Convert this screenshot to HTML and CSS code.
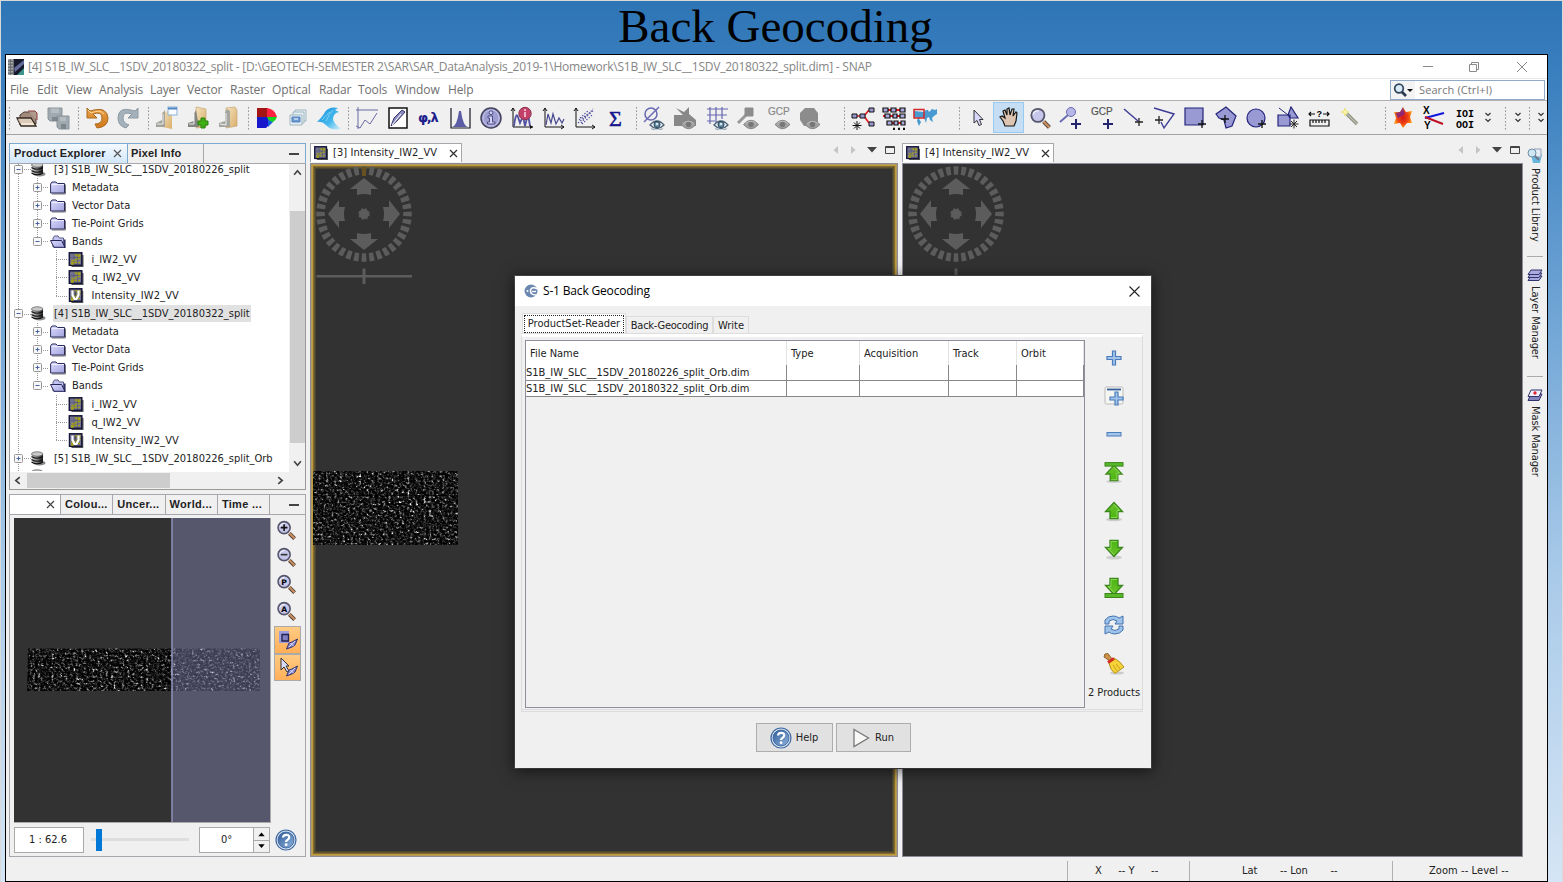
FILE: index.html
```html
<!DOCTYPE html>
<html lang="en">
<head>
<meta charset="utf-8">
<title>Back Geocoding</title>
<link rel="stylesheet" href="styles.css">
</head>
<body>
<svg class="defs" width="0" height="0" aria-hidden="true">
  <defs>
    <filter id="speckle" x="0" y="0" width="100%" height="100%" color-interpolation-filters="sRGB">
      <feTurbulence type="fractalNoise" baseFrequency="0.37 0.43" numOctaves="4" seed="23"/>
      <feColorMatrix type="matrix" values="1.2 .9 0 0 -.64  1.2 .9 0 0 -.64  1.2 .9 0 0 -.64  0 0 0 0 1"/>
      <feComponentTransfer><feFuncR type="gamma" exponent="2.8"/><feFuncG type="gamma" exponent="2.8"/><feFuncB type="gamma" exponent="2.8"/></feComponentTransfer>
      <feComposite in2="SourceGraphic" operator="in"/>
    </filter>
    <linearGradient id="gFolder" x1="0" y1="0" x2="1" y2="1"><stop offset="0" stop-color="#f4e3bd"/><stop offset="1" stop-color="#d9ae6b"/></linearGradient>
    <linearGradient id="gOrange" x1="0" y1="0" x2="0" y2="1"><stop offset="0" stop-color="#e9a24a"/><stop offset="1" stop-color="#d0771a"/></linearGradient>
    <linearGradient id="gBlue" x1="0" y1="0" x2="1" y2="1"><stop offset="0" stop-color="#2f5c9a"/><stop offset="1" stop-color="#8fb4dc"/></linearGradient>
    <linearGradient id="gGreen" x1="0" y1="0" x2="0" y2="1"><stop offset="0" stop-color="#6cc230"/><stop offset="1" stop-color="#49b50f"/></linearGradient>
    <linearGradient id="gCyl" x1="0" y1="0" x2="1" y2="0"><stop offset="0" stop-color="#ddd"/><stop offset=".45" stop-color="#888"/><stop offset="1" stop-color="#222"/></linearGradient>
    <linearGradient id="gWave" x1="0" y1="0" x2="1" y2="1"><stop offset="0" stop-color="#1590d8"/><stop offset=".6" stop-color="#45b8ee"/><stop offset="1" stop-color="#d8f2fc"/></linearGradient>
    <radialGradient id="gStar"><stop offset="0" stop-color="#d01818"/><stop offset=".6" stop-color="#f04414"/><stop offset="1" stop-color="#ff9810"/></radialGradient>
    <linearGradient id="gLav" x1="0" y1="0" x2="1" y2="1"><stop offset="0" stop-color="#dcdcff"/><stop offset="1" stop-color="#a2a2de"/></linearGradient>
    <symbol id="eye" viewBox="0 0 16 12"><path d="M1 7Q8-1 15 7Q8 14 1 7Z" fill="#e9f0f4" stroke="#4b6276" stroke-width="1.3"/><circle cx="8" cy="6.5" r="3" fill="#6e97ae" stroke="#263e54"/><circle cx="8" cy="6" r="1" fill="#fff"/><path d="M2 10.5Q8 14 14 10.5" fill="none" stroke="#8aa0b0"/></symbol>
    <symbol id="eyeoff" viewBox="0 0 16 12"><path d="M.5 6.5Q8-2 15.500 6.500Q8 15 .5 6.500Z" fill="#a2a2a2" stroke="#858585"/><circle cx="8" cy="6.500" r="2.700" fill="#777"/><path d="M2.500 5.500Q8 1 13.500 5.500" fill="none" stroke="#bbb"/></symbol>
    <symbol id="folder" viewBox="0 0 16 14"><path d="M2 13.500H15.500V4" fill="none" stroke="#777"/><path d="M.6 12.500V3.500L2 1.500H6L7.500 3H14.500V12.500Z" fill="url(#gLav)" stroke="#2b2b5c"/><path d="M1.500 4H14" stroke="#eef"/></symbol>
    <symbol id="folderopen" viewBox="0 0 16 14"><path d="M3 12.500V3.500L4.500 1.500H8L9.500 3.500H13.500V12.500Z" fill="#c3c3f0" stroke="#5a5a8c"/><path d="M.5 6H11.500L15 12.800H4Z" fill="url(#gLav)" stroke="#26265a"/><path d="M14.800 5V13.500" stroke="#26265a" stroke-width="1.500"/></symbol>
    <symbol id="band" viewBox="0 0 15 15"><path d="M3 14.300H14.300V3" fill="none" stroke="#555" stroke-width="1.400"/><rect x=".8" y=".8" width="12.500" height="12.500" fill="#74748f" stroke="#16163c" stroke-width="1.500"/><path d="M6 3h6M8 4.500h4M9 6.500h3M3 8.500h4M6 7.500h3M2.500 10.500h6M2.500 12h3M9.500 10.500h2" stroke="#a5a219" stroke-width="1.300"/><path d="M5.500 2V12.500M9 2V12.500M2 5.500H12.500" stroke="#45457c" stroke-width=".4"/></symbol>
    <symbol id="vband" viewBox="0 0 15 15"><use href="#band"/><path d="M4 2.500V7L6 11H8L10 7V2.500" stroke="#fff" stroke-width="2.200" fill="none"/><path d="M7 3V8" stroke="#555" stroke-width="1.200"/></symbol>
    <symbol id="db" viewBox="0 0 15 15"><ellipse cx="9" cy="12" rx="6" ry="2.500" fill="#888"/><path d="M1 3V11Q6.500 15.500 12.500 11V3Z" fill="url(#gCyl)"/><ellipse cx="6.700" cy="3" rx="5.700" ry="2.200" fill="#c9c9c9" stroke="#555" stroke-width=".7"/><path d="M1 5.500Q6.500 9 12.500 5.500M1 8.500Q6.500 12 12.500 8.500M1 11Q6.500 14.500 12.500 11" fill="none" stroke="#111" stroke-width="1.200"/></symbol>
    <symbol id="plusbox" viewBox="0 0 9 9"><rect x=".5" y=".5" width="8" height="8" rx="1" fill="#f8f8f8" stroke="#969696"/><path d="M2.500 4.500H6.500M4.500 2.500V6.500" stroke="#4862a8"/></symbol>
    <symbol id="minusbox" viewBox="0 0 9 9"><rect x=".5" y=".5" width="8" height="8" rx="1" fill="#f8f8f8" stroke="#969696"/><path d="M2.500 4.500H6.500" stroke="#4862a8"/></symbol>
    <symbol id="help" viewBox="0 0 22 22"><circle cx="11" cy="11" r="10" fill="#dbe7f5" stroke="#3c68a2" stroke-width="1.200"/><circle cx="11" cy="11" r="8" fill="url(#gBlue)" stroke="#315b96" stroke-width=".8"/><path d="M8 8.500Q8 5.800 11.200 5.800T14.200 8.600Q14.200 10 12.400 11Q11.100 11.700 11.100 13" fill="none" stroke="#fff" stroke-width="2.200"/><circle cx="11.100" cy="15.700" r="1.400" fill="#fff"/></symbol>
    <symbol id="glass" viewBox="0 0 22 22"><path d="M14 14L19.500 19.500" stroke="#4e3a33" stroke-width="4"/><path d="M14 14L19.500 19.500" stroke="#c98f60" stroke-width="2.200"/><circle cx="8.500" cy="8" r="6.300" fill="#c6c6ea" stroke="#55556c" stroke-width="1.700"/><path d="M4 7Q5 3.500 9 3.500" stroke="#fff" fill="none"/></symbol>
    <symbol id="wheel" viewBox="0 0 98 122"><g fill="#5c5c5c"><circle cx="49" cy="50" r="43.500" fill="none" stroke="#5c5c5c" stroke-width="8.500" pathLength="36" stroke-dasharray=".62 .38" stroke-dashoffset=".31"/><path id="arr" d="M49 14L63 25H56V31Q49 29 42 31V25H35Z"/><use href="#arr" transform="rotate(90 49 50)"/><use href="#arr" transform="rotate(180 49 50)"/><use href="#arr" transform="rotate(270 49 50)"/><circle cx="49" cy="50" r="5" stroke="#5c5c5c" stroke-dasharray="2 2" stroke-width="1.500"/><path d="M1.500 111H97V113.500H1.500ZM47.500 104.500H50.500V120H47.500Z"/></g></symbol>
    <symbol id="toparrow" viewBox="0 0 20 22"><path d="M10 1.500L18.500 10.500H14V17.500H6V10.500H1.500Z" fill="url(#gGreen)" stroke="#3c871c" stroke-width="1.300"/><path d="M10 3.300L15.800 9.500H13V16.500H7" fill="none" stroke="#9be467" stroke-width=".8"/></symbol>
    <symbol id="hands" viewBox="0 0 12 12"><path d="M.5 11L3 5L6 4L11.500 1L9 7L6 9Z" fill="#8c8ccb" stroke="#33336f"/><path d="M3 9L9 3M4.500 5L7.500 8" stroke="#dcdcff" stroke-width=".9"/></symbol>
  </defs>
</svg>

<main class="slide">
<h1 class="slide-title">Back Geocoding</h1>
<section class="window">
  <header class="titlebar">
    <svg class="app-icon" width="16" height="16" viewBox="0 0 16 16"><rect width="16" height="16" fill="#16192c"/><path d="M0 0H6V16H0Z" fill="#6d7075"/><path d="M1 0V16M4 0V16" stroke="#ddd" stroke-dasharray="1.500 1.500"/><path d="M6 9L16 1V5L7 13Z" fill="#646b9b"/><path d="M9 16L16 9V16Z" fill="#3f958e"/></svg>
    <span class="window-name">[4] S1B_IW_SLC__1SDV_20180322_split - [D:\GEOTECH-SEMESTER 2\SAR\SAR_DataAnalysis_2019-1\Homework\S1B_IW_SLC__1SDV_20180322_split.dim] - SNAP</span>
    <svg class="win-controls" width="106" height="14" viewBox="0 0 106 14" fill="none" stroke="#8a8a8a"><path d="M0 6.500H10M46.500 4.500H53.500V11.500H46.500ZM48.500 4.500V2.500H55.500V9.500H53.500M94 2L104 12M104 2L94 12"/></svg>
  </header>
  <nav class="menubar">
    <span class="m-file">File</span><span class="m-edit">Edit</span><span class="m-view">View</span><span class="m-ana">Analysis</span><span class="m-lay">Layer</span><span class="m-vec">Vector</span><span class="m-ras">Raster</span><span class="m-opt">Optical</span><span class="m-rad">Radar</span><span class="m-tool">Tools</span><span class="m-win">Window</span><span>Help</span>
    <div class="search"><svg width="24" height="18" viewBox="0 0 24 18"><circle cx="8" cy="7.500" r="4.300" fill="#d9ebf6" stroke="#32455c" stroke-width="1.700"/><path d="M11 11L15 15" stroke="#26394f" stroke-width="2.600"/><path d="M16 8H22L19 11Z" fill="#111"/></svg><span>Search (Ctrl+I)</span></div>
  </nav>
  <div class="toolbar">
    <i class="grip g-first"></i>
    <svg class="tool" viewBox="0 0 24 24"><path d="M5 19V9L9 6H18L21 8V18Z" fill="#a08b7d" stroke="#4a3d35"/><path d="M13 5H20L22 7V14" fill="#b09a8c" stroke="#8d3f3a"/><path d="M2 12H16L21 20H6Z" fill="#f2e6d4" stroke="#332820" stroke-width="1.300"/><path d="M3 14H16M4 16H17" stroke="#c4b09b"/></svg>
    <svg class="tool" viewBox="0 0 24 24"><g fill="#a0a9b0" stroke="#8a949b"><path d="M2 2H16V15H4L2 13Z"/><path d="M11 10H23V23H13L11 21Z"/></g><path d="M5 2.500H13V7H5ZM14 11H20V15H14Z" fill="#b5bcc2"/><path d="M6 11H12V15H6ZM15 18H20V23H15Z" fill="#7d878e"/></svg>
    <i class="grip g8"></i>
    <svg class="tool" viewBox="0 0 24 24"><path d="M2 2V12H12L8 8Q17 5 17 12Q17 18 10 18L12 22Q23 21 23 12Q22 1 9 4L5 5Z" fill="url(#gOrange)" stroke="#a86a20"/><path d="M3 4L6 7Q15 3 19 8" stroke="#ffd696" fill="none"/></svg>
    <svg class="tool" viewBox="0 0 24 24"><path d="M22 2V12H12L16 8Q7 5 7 12Q7 17 13 19L10 22Q2 20 2 12Q2 1 15 4L19 5Z" fill="#a4b1ba" stroke="#8d9aa3"/></svg>
    <i class="grip g8"></i>
    <svg class="tool" viewBox="0 0 24 24"><path d="M8 6L18 5V23L8 21Z" fill="url(#gFolder)"/><path d="M2 21V17L8 14V8L11 4V21Z" fill="#a3a39c"/><path d="M3 18L9 18V8" stroke="#eee" fill="none"/><rect x="14" y="1" width="9" height="8" fill="#f8fcff" stroke="#8db2d7"/><path d="M14 2.500H23" stroke="#5187c3" stroke-width="2"/></svg>
    <svg class="tool" viewBox="0 0 24 24"><path d="M10 1L20 3V21L10 22Z" fill="url(#gFolder)" stroke="#c8a573" stroke-width=".7"/><path d="M2 21V17L8 15V8L10 4L13 21Z" fill="#858581"/><path d="M3 18L8 18V8" stroke="#eee" fill="none"/><path d="M15 12H19V15H22V19H19V22H15V19H12V15H15Z" fill="#3faf13" stroke="#28820c"/></svg>
    <svg class="tool" viewBox="0 0 24 24"><path d="M9 2L18 1L20 4V20L9 22Z" fill="url(#gFolder)" stroke="#c8a573" stroke-width=".7"/><path d="M2 21V17L8 15V6L10 3L13 5V21Z" fill="#a5a5a0"/><path d="M3 18L9 19V7" stroke="#eee" fill="none"/></svg>
    <i class="grip g7"></i>
    <svg class="tool" viewBox="0 0 24 24"><path d="M2 2H13V12H2Z" fill="#a31414"/><path d="M12 2Q20 3 22 11L12 12Z" fill="#ff2140"/><path d="M2 11H13L15 18L11 22H2Z" fill="#1717cc"/><path d="M12 11H22Q21 14 18 16L14 15Z" fill="#16d51e"/><path d="M13 14L18 16L13 21Z" fill="#1760d8"/></svg>
    <svg class="tool" viewBox="0 0 24 24" fill="#e5f0f4" stroke="#9fb6c0"><path d="M9 4H20V15H9Z"/><path d="M7 6H18V17H7Z"/><path d="M4 9H16V19H4Z"/><path d="M6 11H14V16H6Z" fill="#6a9bd0" stroke="#557ebd"/><path d="M8 13H12" stroke="#fff"/></svg>
    <svg class="tool" viewBox="0 0 24 24"><path d="M0 16Q6 10 8 6Q12 0 21 2L18 4L22 6L19 7Q11 13 24 23Q14 25 9 19Q5 15 0 16Z" fill="url(#gWave)"/><path d="M5 14Q11 7 13 6M9 15Q12 8 16 4" stroke="#85d3f6" fill="none"/></svg>
    <i class="grip g7"></i>
    <svg class="tool" viewBox="0 0 24 24" fill="none" stroke="#6a6aa4"><path d="M3 1V23M1 4H23M1 20L5 22L10 14L15 18L22 7"/></svg>
    <svg class="tool" viewBox="0 0 24 24"><path d="M3 2H21V22H3Z" fill="#fff" stroke="#111" stroke-width="1.500"/><path d="M5 20L8 12L16 4L19 6L11 15Z" fill="#8c8cc0" stroke="#35356d"/><path d="M6 19L15 8" stroke="#fff"/></svg>
    <svg class="tool" viewBox="0 0 24 24"><text class="phi" x="1" y="16">φ,λ</text></svg>
    <svg class="tool" viewBox="0 0 24 24"><path d="M4 21Q9 20 11 5H13Q15 20 20 21Z" fill="#5c5ca6"/><path d="M3 2V22H22V2" fill="none" stroke="#171725" stroke-width="1.200"/></svg>
    <svg class="tool" viewBox="0 0 24 24"><circle cx="12" cy="12" r="10" fill="#9e9ed0" stroke="#44445c" stroke-width="1.500"/><circle cx="12" cy="12" r="8" fill="none" stroke="#c4c4ed"/><path d="M9 10H13.500V16H16V18H8.500V16H10.500V12H9Z" fill="#d4d4f8" stroke="#4c4c84"/><circle cx="12" cy="6.700" r="1.900" fill="#d4d4f8" stroke="#4c4c84"/></svg>
    <svg class="tool" viewBox="0 0 24 24"><path d="M3 2V21H23M1 5L3 2L5 5" fill="none" stroke="#111"/><path d="M4 20Q6 5 8 11L10 17L13 10L15 20L18 8L20 20" fill="none" stroke="#5151a2" stroke-width="1.800"/><circle cx="15" cy="7.500" r="6.200" fill="#c44269" stroke="#8a3453"/><path d="M15 6V11M15 3V5" stroke="#e9b3c8" stroke-width="2"/><path d="M20 19L23 21L20 23" fill="#111"/></svg>
    <svg class="tool" viewBox="0 0 24 24" fill="none"><path d="M3 2V21H22M1 5L3 2L5 5M19 19L22 21L19 23" stroke="#111"/><path d="M4 19L6 8L9 17L11 8L14 18L17 12L20 17L22 13" stroke="#46468f" stroke-width="1.200"/></svg>
    <svg class="tool" viewBox="0 0 24 24" fill="none"><path d="M3 2V21H22M1 5L3 2L5 5M19 19L22 21L19 23" stroke="#111"/><path d="M5 17L21 4M6 14L18 6M8 17L20 3M9 18L19 9M7 12L16 4" stroke="#4c4c9c" stroke-width="1.200" stroke-dasharray="1.300 1.700"/></svg>
    <svg class="tool" viewBox="0 0 24 24"><text class="sigma" x="5" y="20">Σ</text></svg>
    <i class="grip g8"></i>
    <svg class="tool" viewBox="0 0 24 24"><circle cx="9" cy="8" r="6" fill="none" stroke="#6868b3" stroke-width="1.500"/><path d="M2 16L17 1" stroke="#6868b3" stroke-width="1.500"/><use href="#eye" x="7" y="12" width="16" height="12"/></svg>
    <svg class="tool" viewBox="0 0 24 24"><path d="M1 9H10L3 2L11 6L16 1V8L23 14V20H1Z" fill="#888"/><use href="#eyeoff" x="7" y="12" width="17" height="12"/></svg>
    <svg class="tool" viewBox="0 0 24 24"><path d="M2 3H23M2 9H22M2 15H10M5 1V18M11 1V17M17 1V13" stroke="#6666af" stroke-width="1.200"/><use href="#eye" x="8" y="12" width="16" height="12"/></svg>
    <svg class="tool" viewBox="0 0 24 24"><path d="M2 17L11 8" stroke="#999" stroke-width="3"/><path d="M9 2H17V10H9Z" fill="#8c8c8c" stroke="#8c8c8c" stroke-linejoin="round"/><use href="#eyeoff" x="7" y="12" width="16" height="12"/></svg>
    <svg class="tool" viewBox="0 0 24 24"><text class="gcp off" x="1" y="9">GCP</text><use href="#eyeoff" x="7" y="12" width="17" height="12"/></svg>
    <svg class="tool" viewBox="0 0 24 24"><path d="M7 2H16L20 7V16L14 20H6L2 14V7Z" fill="#8c8c8c"/><use href="#eyeoff" x="6" y="12" width="17" height="12"/></svg>
    <i class="grip g21"></i>
    <svg class="tool" viewBox="0 0 24 24"><path d="M3 10H12M13 10L18 4M13 10L18 17" stroke="#e21c20" stroke-width="1.700"/><g fill="#9999d0" stroke="#111"><path d="M1 8H6V12H1ZM9 8H14V12H9ZM18 2H23V6H18ZM18 16H23V20H18Z"/></g><path d="M6 15V24M1.500 19.500H10.500M3 16.500L9 22.500M9 16.500L3 22.500" stroke="#111"/></svg>
    <svg class="tool" viewBox="0 0 24 24"><path d="M1 4H23M1 10H23M5 17H22" stroke="#e21c20" stroke-width="1.800"/><g fill="#aaaadc" stroke="#111" stroke-width="1.200"><path d="M1 2H6V6H1ZM9 2H14V6H9ZM18 2H23V6H18ZM3 8H8V12H3ZM11 8H15V12H11ZM18 8H23V12H18ZM5 15H10V19H5ZM12 15H16V19H12ZM19 15H23V19H19Z"/></g><path d="M11 23H13M16 23H18M21 23H23" stroke="#111" stroke-width="2.500"/></svg>
    <svg class="tool" viewBox="0 0 24 24"><path d="M1 5L11 6L13 4H15L16 6L19 3L22 4L24 3V8L21 10L19 12L20 16L17 14L16 11L14 12L13 17L11 12L8 11L6 13L8 16L6 20L4 15L5 12L1 11Z" fill="#489bd0"/><path d="M1 3.500H11V12H1Z" fill="none" stroke="#d32929" stroke-width="1.500"/></svg>
    <i class="grip g21"></i>
    <svg class="tool" viewBox="0 0 24 24"><path d="M8 4V17L11 14.500L13 19.500L15.500 18.500L13.500 13.500H17Z" fill="#d9d9fb" stroke="#333"/></svg>
    <span class="tool-on"><svg width="24" height="24" viewBox="0 0 24 24"><path d="M8 20L6 15L3 11L5 10L8 12L6 5L8 4L10 9L10 3L12 2L13 9L15 3H17L16 10L19 6L20 7L19 15L17 20Z" fill="#dec5b1" stroke="#161616" stroke-width="1.200"/></svg></span>
    <svg class="tool" viewBox="0 0 24 24"><use href="#glass" x="1" y="1" width="23" height="23"/></svg>
    <svg class="tool" viewBox="0 0 24 24"><path d="M1 16L9 9" stroke="#6868b0" stroke-width="1.800"/><circle cx="12" cy="6" r="4.500" fill="#b6b6e9" stroke="#6b6bae"/><path d="M17 13V23M12 18H22" stroke="#24246e" stroke-width="2"/></svg>
    <svg class="tool" viewBox="0 0 24 24"><text class="gcp" x="1" y="9">GCP</text><path d="M18 13V23M13 18H23" stroke="#24246e" stroke-width="2"/></svg>
    <svg class="tool" viewBox="0 0 24 24"><path d="M3 3L17 15" stroke="#3e3e96" stroke-width="1.500"/><path d="M18 12V20M14 16H22" stroke="#222" stroke-width="1.300"/></svg>
    <svg class="tool" viewBox="0 0 24 24"><path d="M2 2L22 8L12 22L9 16" fill="none" stroke="#3e3e96" stroke-width="1.400"/><path d="M7 10V18M3 14H11" stroke="#222" stroke-width="1.300"/></svg>
    <svg class="tool" viewBox="0 0 24 24"><path d="M2 2H20V19H2Z" fill="#9999d4" stroke="#23237b" stroke-width="1.200"/><path d="M19 14V22M15 18H23" stroke="#111" stroke-width="1.300"/></svg>
    <svg class="tool" viewBox="0 0 24 24"><path d="M2 8L12 1L22 10L18 20L12 22L10 14L5 12Z" fill="#9999d4" stroke="#23237b" stroke-width="1.200"/><path d="M11 9V17M7 13H15" stroke="#111" stroke-width="1.300"/></svg>
    <svg class="tool" viewBox="0 0 24 24"><circle cx="11" cy="12" r="9" fill="#9999d4" stroke="#23237b" stroke-width="1.200"/><path d="M17 14V22M13 18H21" stroke="#111" stroke-width="1.300"/></svg>
    <svg class="tool" viewBox="0 0 24 24"><path d="M2 9H14V20H2ZM12 9L15 1L22 12H14Z" fill="#9999d4" stroke="#23237b" stroke-width="1.200"/><path d="M3 2L12 9" stroke="#23237b"/><path d="M18 13.500V22.500M13.500 18H22.500M15 15L21 21M21 15L15 21" stroke="#222"/></svg>
    <svg class="tool" viewBox="0 0 24 24"><path d="M3 14H22V20H3ZM6 14V17M9 14V17M12 14V17M15 14V17M18 14V17M2 8H8M16 8H22M4 6L2 8L4 10M20 6L22 8L20 10" fill="none" stroke="#111" stroke-width="1.200"/><text class="q" x="9.500" y="11">?</text></svg>
    <svg class="tool" viewBox="0 0 24 24"><path d="M8 8L18 18" stroke="#8b8f82" stroke-width="3.500"/><path d="M8 8L18 18" stroke="#b9c0a9" stroke-width="1.300"/><path d="M6 2L7 5L10 6L7 7L6 10L5 7L2 6L5 5Z" fill="#fff7a3" stroke="#e5dc6b" stroke-width=".7"/></svg>
    <i class="grip g-end"></i>
    <svg class="tool" viewBox="0 0 24 24"><path d="M12 1L15 6L21 5L19 11L21 17L16 17L12 22L9 17L3 18L5 12L3 6L9 6Z" fill="url(#gStar)"/><path d="M12 1L14 8L7 12L4 7L9 6Z" fill="#5a1aad" opacity=".6"/></svg>
    <svg class="tool" viewBox="0 0 24 24"><path d="M3 12L22 7" stroke="#1018dd" stroke-width="2"/><path d="M3 11L21 18" stroke="#bd1024" stroke-width="2"/><text class="xy" x="1" y="8">X</text><text class="xy" x="2" y="23">Y</text></svg>
    <svg class="tool" viewBox="0 0 24 24"><text class="bits" x="3" y="10.500">IOI</text><text class="bits" x="3" y="21.500">OOI</text></svg>
    <svg class="more more-a" viewBox="0 0 8 12"><path d="M1.500 1L4 3.500L6.500 1M1.500 7L4 9.500L6.500 7"/></svg>
    <i class="grip g-m1"></i><svg class="more" viewBox="0 0 8 12"><path d="M1.500 1L4 3.500L6.500 1M1.500 7L4 9.500L6.500 7"/></svg>
    <i class="grip g-m2"></i><svg class="more" viewBox="0 0 8 12"><path d="M1.500 1L4 3.500L6.500 1M1.500 7L4 9.500L6.500 7"/></svg>
  </div>

  <div class="work">
    <aside class="left">
      <section class="explorer">
        <div class="tabs active-tabs"><b class="tab tab-pe">Product Explorer <svg width="9" height="9" viewBox="0 0 9 9"><path d="M1 1L8 8M8 1L1 8" stroke="#555" stroke-width="1.200"/></svg></b><b class="tab tab-pi">Pixel Info</b><i class="dash"></i></div>
        <div class="tree-wrap">
          <div class="tree">
            <div class="row r0"><svg class="bx"><use href="#minusbox"/></svg><svg class="ic"><use href="#db"/></svg><span>[3] S1B_IW_SLC__1SDV_20180226_split</span></div>
            <div class="row r1"><svg class="bx"><use href="#plusbox"/></svg><svg class="ic"><use href="#folder"/></svg><span>Metadata</span></div>
            <div class="row r1"><svg class="bx"><use href="#plusbox"/></svg><svg class="ic"><use href="#folder"/></svg><span>Vector Data</span></div>
            <div class="row r1"><svg class="bx"><use href="#plusbox"/></svg><svg class="ic"><use href="#folder"/></svg><span>Tie-Point Grids</span></div>
            <div class="row r1 last"><svg class="bx"><use href="#minusbox"/></svg><svg class="ic"><use href="#folderopen"/></svg><span>Bands</span></div>
            <div class="row r2"><svg class="ic"><use href="#band"/></svg><span>i_IW2_VV</span></div>
            <div class="row r2"><svg class="ic"><use href="#band"/></svg><span>q_IW2_VV</span></div>
            <div class="row r2 last"><svg class="ic"><use href="#vband"/></svg><span class="wide">Intensity_IW2_VV</span></div>
            <div class="row r0"><svg class="bx"><use href="#minusbox"/></svg><svg class="ic"><use href="#db"/></svg><span class="sel">[4] S1B_IW_SLC__1SDV_20180322_split</span></div>
            <div class="row r1"><svg class="bx"><use href="#plusbox"/></svg><svg class="ic"><use href="#folder"/></svg><span>Metadata</span></div>
            <div class="row r1"><svg class="bx"><use href="#plusbox"/></svg><svg class="ic"><use href="#folder"/></svg><span>Vector Data</span></div>
            <div class="row r1"><svg class="bx"><use href="#plusbox"/></svg><svg class="ic"><use href="#folder"/></svg><span>Tie-Point Grids</span></div>
            <div class="row r1 last"><svg class="bx"><use href="#minusbox"/></svg><svg class="ic"><use href="#folderopen"/></svg><span>Bands</span></div>
            <div class="row r2"><svg class="ic"><use href="#band"/></svg><span>i_IW2_VV</span></div>
            <div class="row r2"><svg class="ic"><use href="#band"/></svg><span>q_IW2_VV</span></div>
            <div class="row r2 last"><svg class="ic"><use href="#vband"/></svg><span class="wide">Intensity_IW2_VV</span></div>
            <div class="row r0"><svg class="bx"><use href="#plusbox"/></svg><svg class="ic"><use href="#db"/></svg><span>[5] S1B_IW_SLC__1SDV_20180226_split_Orb</span></div>
            <div class="row r0"><svg class="bx"></svg><svg class="ic"><use href="#db"/></svg></div>
          </div>
          <div class="vscroll"><svg viewBox="0 0 8 6"><path d="M1 5L4 1.500L7 5"/></svg><i></i><svg viewBox="0 0 8 6"><path d="M1 1L4 4.500L7 1"/></svg></div>
        </div>
        <div class="hscroll"><svg viewBox="0 0 6 8"><path d="M5 1L1.500 4L5 7"/></svg><i></i><svg viewBox="0 0 6 8"><path d="M1 1L4.500 4L1 7"/></svg></div>
      </section>
      <section class="navigator">
        <div class="tabs"><b class="tab tab-x"><svg width="9" height="9" viewBox="0 0 9 9"><path d="M1 1L8 8M8 1L1 8" stroke="#444" stroke-width="1.200"/></svg></b><b class="tab sm">Colou...</b><b class="tab sm">Uncer...</b><b class="tab sm">World...</b><b class="tab sm">Time ...</b><i class="dash"></i></div>
        <div class="nav-main">
          <div class="overview">
            <svg width="256" height="304" viewBox="0 0 256 304"><rect width="256" height="304" fill="#323232"/><path d="M14 130.500H246V173H13Z" fill="#000" filter="url(#speckle)"/><path d="M14 144.500H158" stroke="#000" stroke-opacity=".6"/><rect x="158" width="98" height="304" fill="#8383b5" opacity=".45"/><path d="M158 0V304" stroke="#9292bd" stroke-width="1.500"/></svg>
          </div>
          <div class="nav-tools">
            <svg class="nt" viewBox="0 0 22 22"><use href="#glass"/><path d="M5 8H12M8.500 4.500V11.500" stroke="#111" stroke-width="1.700"/></svg>
            <svg class="nt" viewBox="0 0 22 22"><use href="#glass"/><path d="M5 8H12" stroke="#333" stroke-width="1.700"/></svg>
            <svg class="nt" viewBox="0 0 22 22"><use href="#glass"/><text class="zl" x="5.500" y="11">P</text></svg>
            <svg class="nt" viewBox="0 0 22 22"><use href="#glass"/><text class="zl" x="5.500" y="11">A</text></svg>
            <span class="sync"><svg width="20" height="20" viewBox="0 0 20 20"><path d="M1 1H11V13H1Z" fill="#9d9ddd"/><path d="M4 4.500H10.500V11H4Z" fill="#7f7fbf" stroke="#23234f" stroke-width="1.400"/><use href="#hands" x="8" y="8" width="12" height="12"/></svg></span>
            <span class="sync"><svg width="20" height="20" viewBox="0 0 20 20"><path d="M3 1V13L6 10L9 15L11 14L8 9H11Z" fill="#d9d9fb" stroke="#333"/><use href="#hands" x="8" y="8" width="12" height="12"/></svg></span>
          </div>
        </div>
        <div class="nav-foot"><span class="field scale">1 : 62.6</span><span class="slider"><i></i></span><span class="field rot">0°</span><span class="spin"><svg viewBox="0 0 14 10"><path d="M4 7L7 3.500L10 7Z"/></svg><svg viewBox="0 0 14 10"><path d="M4 3L7 6.500L10 3Z"/></svg></span><svg class="nav-help" viewBox="0 0 22 22"><use href="#help"/></svg></div>
      </section>
    </aside>

    <section class="view view-a">
      <div class="view-tabs"><span class="vtab"><svg width="14" height="14"><use href="#band"/></svg><span>[3] Intensity_IW2_VV</span><svg width="9" height="9" viewBox="0 0 9 9"><path d="M1 1L8 8M8 1L1 8" stroke="#333" stroke-width="1.300"/></svg></span><svg class="view-ctl" viewBox="0 0 66 12"><path d="M7 2V10L2.500 6ZM20 2V10L24.500 6Z" fill="#c4c4c4"/><path d="M36 3H46L41 8.500Z" fill="#444"/><path d="M54.500 2.500H63.500V9.500H54.500ZM54.500 3.500H63.500" fill="none" stroke="#444"/></svg></div>
      <div class="canvas gold"><svg class="wheel"><use href="#wheel"/></svg><i class="north"></i><svg class="scene" viewBox="0 0 145 74"><path d="M0 0H145V74H0Z" filter="url(#speckle)"/><path d="M0 24.500H145" stroke="#000" stroke-opacity=".6"/></svg></div>
    </section>
    <section class="view view-b">
      <div class="view-tabs"><span class="vtab"><svg width="14" height="14"><use href="#band"/></svg><span>[4] Intensity_IW2_VV</span><svg width="9" height="9" viewBox="0 0 9 9"><path d="M1 1L8 8M8 1L1 8" stroke="#333" stroke-width="1.300"/></svg></span><svg class="view-ctl" viewBox="0 0 66 12"><path d="M7 2V10L2.500 6ZM20 2V10L24.500 6Z" fill="#c4c4c4"/><path d="M36 3H46L41 8.500Z" fill="#444"/><path d="M54.500 2.500H63.500V9.500H54.500ZM54.500 3.500H63.500" fill="none" stroke="#444"/></svg></div>
      <div class="canvas"><svg class="wheel"><use href="#wheel"/></svg></div>
    </section>
    <aside class="side">
      <span class="side-item s1"><svg width="16" height="16" viewBox="0 0 16 16"><path d="M4 7L15 6L13 15H6Z" fill="#69b6de"/><path d="M7 1H14V9H7Z" fill="#e2eef4" stroke="#99b"/><circle cx="5" cy="5" r="4" fill="#cfe7f3" stroke="#6c8fa6"/><path d="M8 8L12 12" stroke="#68788a" stroke-width="2"/></svg><span>Product Library</span></span>
      <span class="side-item s2"><svg width="16" height="14" viewBox="0 0 16 14"><g fill="#a9a9df" stroke="#33336b"><path d="M4 8H15L12 12.500H1Z"/><path d="M4 5H15L12 9.500H1Z"/><path d="M4 2H15L12 6.500H1Z"/></g></svg><span>Layer Manager</span></span>
      <span class="side-item s3"><svg width="16" height="14" viewBox="0 0 16 14"><path d="M4 6H15L12 12.500H1Z" fill="#8484bf" stroke="#33336b"/><path d="M4 2H15L12 8.500H1Z" fill="#f1f1ff" stroke="#33336b"/><circle cx="8" cy="5" r="1.700" fill="#e52430"/></svg><span>Mask Manager</span></span>
    </aside>
  </div>

  <footer class="status"><span class="st st-xy"><span>X</span><span>-- Y</span><span>--</span></span><span class="st st-ll"><span>Lat</span><span>-- Lon</span><span>--</span></span><span class="st st-z">Zoom -- Level --</span></footer>
</section>

<section class="dialog">
  <header class="dlg-title"><svg width="14" height="14" viewBox="0 0 14 14"><circle cx="7" cy="7" r="6.500" fill="#6d88b0"/><path d="M13.500 5Q8 2 6.500 6Q6 11 12 11" fill="none" stroke="#fff" stroke-width="1.500"/><path d="M8 7.500H12" stroke="#fff" stroke-width="1.300"/><circle cx="3.500" cy="7" r="1" fill="#fff"/></svg><span>S-1 Back Geocoding</span><svg class="dlg-close" width="11" height="11" viewBox="0 0 11 11"><path d="M.5.5L10.500 10.500M10.500.5L.5 10.500" stroke="#222" stroke-width="1.100"/></svg></header>
  <div class="dlg-tabs"><span class="dt on"><em>ProductSet-Reader</em></span><span class="dt dt-b">Back-Geocoding</span><span class="dt dt-w">Write</span></div>
  <div class="pane">
    <div class="table">
      <div class="tr th"><span>File Name</span><span>Type</span><span>Acquisition</span><span>Track</span><span>Orbit</span></div>
      <div class="tr"><span>S1B_IW_SLC__1SDV_20180226_split_Orb.dim</span><span></span><span></span><span></span><span></span></div>
      <div class="tr"><span>S1B_IW_SLC__1SDV_20180322_split_Orb.dim</span><span></span><span></span><span></span><span></span></div>
    </div>
    <div class="actions">
      <svg viewBox="0 0 22 22"><path d="M9.500 4H12.500V9.500H18V12.500H12.500V18H9.500V12.500H4V9.500H9.500Z" fill="#a3c4ea" stroke="#4b7dbb" stroke-width="1.200"/></svg>
      <svg viewBox="0 0 22 22"><rect x="2" y="2" width="18" height="17" rx="1.500" fill="#f5f5f2" stroke="#bbb"/><path d="M4 4.500H18" stroke="#345f9c" stroke-width="1.800"/><path d="M12 7H15V12H20V15H15V20H12V15H7V12H12Z" fill="#a3c4ea" stroke="#4b7dbb" stroke-width="1.200"/></svg>
      <svg viewBox="0 0 22 22"><rect x="4" y="9.500" width="14" height="3.500" fill="#a3c4ea" stroke="#4b7dbb"/></svg>
      <svg viewBox="0 0 22 22"><ellipse cx="11" cy="19.500" rx="8" ry="1.500" fill="#ccc"/><use href="#toparrow" x="1" y="2" width="20" height="21"/><rect x="2" y="0.600" width="18" height="3.500" fill="#59b72a" stroke="#3c871c"/></svg>
      <svg viewBox="0 0 22 22"><ellipse cx="11" cy="19.500" rx="8" ry="1.800" fill="#ccc"/><use href="#toparrow" x="1" y="1" width="20" height="22"/></svg>
      <svg viewBox="0 0 22 22"><ellipse cx="11" cy="19.500" rx="8" ry="2" fill="#d0d0d0"/><use href="#toparrow" x="1" y="2" width="20" height="22" transform="rotate(180 11 11)"/></svg>
      <svg viewBox="0 0 22 22"><use href="#toparrow" x="1" y="2" width="20" height="22" transform="rotate(180 11 11)"/><rect x="2" y="17.500" width="18" height="4" fill="#59b72a" stroke="#3c871c"/></svg>
      <svg viewBox="0 0 22 22"><g fill="#9fc2e8" stroke="#4375b3"><path id="rf" d="M2 10V6Q5 2 10 2Q14 2 16 4L20 2V10H12L14 7Q10 4 6 7V10Z"/><use href="#rf" transform="rotate(180 11 11)"/></g></svg>
      <svg viewBox="0 0 22 22"><ellipse cx="14" cy="20" rx="7" ry="1.600" fill="#ccc"/><path d="M2 1L5 .6L9 6L7 8L1 4Z" fill="#ce944a" stroke="#8c622d"/><path d="M11 5Q17 8 21 14L12 20.500Q7 17 6 10Z" fill="#f6d336" stroke="#b29120"/><path d="M5 9.500L11 5.500" stroke="#d32d1f" stroke-width="3"/><path d="M10 12L14 18M13 11L17 16" stroke="#c6a022"/></svg>
      <span>2 Products</span>
    </div>
  </div>
  <div class="buttons"><span class="btn b-help"><svg width="22" height="22" viewBox="0 0 22 22"><use href="#help"/></svg>Help</span><span class="btn b-run"><svg width="18" height="20" viewBox="0 0 18 20"><path d="M2 1.500L16.500 10L2 18.500Z" fill="#f8f8f6" stroke="#777" stroke-width="1.300"/></svg>Run</span></div>
</section>
</main>
</body>
</html>
```
FILE: styles.css
```css
* { box-sizing: border-box; }
body { margin: 0; overflow: hidden; font: 11px/14px "DejaVu Sans Condensed", "DejaVu Sans", sans-serif; font-stretch: condensed; color: #222; }
svg { display: block; flex: none; }
i { font-style: normal; }
.defs { position: absolute; }

.slide { position: relative; width: 1563px; height: 882px; border: solid #d9d9d9; border-width: 1px 1px 0 1px; background: linear-gradient(#2e75b6 0, #3b80bf 9%, #6fa4d5 35%, #a9cae9 65%, #d5e5f5 100%); }
.slide-title { margin: 0; height: 53px; padding-right: 12px; text-align: center; font: 47px/50px "Liberation Serif", serif; color: #000; }

.window { width: 1543px; height: 828px; margin-left: 4px; border: 1px solid #000; background: #f0f0f0; display: flex; flex-direction: column; }
.titlebar { height: 24px; background: #fff; border-bottom: 1px solid #e8e8e8; display: flex; align-items: center; padding: 0 18px 0 2px; }
.window-name { font: 12px/16px "Open Sans", sans-serif; color: #858585; margin-left: 4px; letter-spacing: -.23px; white-space: nowrap; }
.win-controls { margin-left: auto; }
.menubar { height: 22px; flex: none; background: #fff; border-bottom: 1px solid #b0b0b0; display: flex; align-items: center; padding-left: 4px; font: 12px/16px "Open Sans", sans-serif; color: #6f6f6f; }
.menubar > span { flex: none; letter-spacing: -.12px; }
.m-file { width: 27px; } .m-edit { width: 29px; } .m-view { width: 33px; } .m-ana { width: 51px; } .m-lay { width: 37px; }
.m-vec { width: 43px; } .m-ras { width: 42px; } .m-opt { width: 47px; } .m-rad { width: 39px; } .m-tool { width: 37px; } .m-win { width: 53px; }
.search { margin-left: auto; margin-right: 2px; width: 155px; height: 20px; border: 1px solid #8fabc9; background: #fff; display: flex; align-items: center; gap: 4px; font-size: 11px; color: #777; }
.search svg { background: #f3f3f3; }
.search span { letter-spacing: .1px; }

.toolbar { height: 34px; flex: none; border-bottom: 1px solid #a3a3a3; display: flex; align-items: center; }
.tool { width: 24px; height: 24px; margin: 0 3.55px; }
.grip { flex: none; height: 24px; background: radial-gradient(circle, #9a9a9a 0 .8px, transparent 1.100px) right 1px top / 3px 3.500px repeat-y; }
.g-first { width: 5.500px; } .g8 { width: 7.500px; } .g7 { width: 7px; } .g21 { width: 21.700px; } .g-end { width: 21.500px; }
.g-m1 { width: 16px; margin-right: 6px; } .g-m2 { width: 10px; margin-right: 5px; }
.tool-on { width: 31px; height: 31px; flex: none; border: 1px solid #99cbf2; background: #c5def4; display: flex; align-items: center; justify-content: center; }
.more { width: 8px; height: 12px; fill: none; stroke: #333; stroke-width: 1.200; }
.more-a { margin-left: 3.500px; }
.phi { font: bold 13px "DejaVu Sans"; fill: #20208c; letter-spacing: -1.300px; }
.sigma { font: 22px/1 "Liberation Serif"; fill: #14148c; stroke: #14148c; stroke-width: .5px; }
.gcp { font: 10px "Liberation Sans"; fill: #555; stroke: #555; stroke-width: .2px; }
.gcp.off { fill: #888; stroke: #888; }
.q { font: bold 9px "Liberation Sans"; }
.xy { font: bold 10px "Liberation Sans"; }
.bits { font: bold 10px "Liberation Mono"; }

.work { height: 724px; flex: none; display: flex; }
.left { width: 297px; margin: 8px 4px 0 3px; display: flex; flex-direction: column; gap: 4px; }
.explorer { height: 347px; border: 1px solid #999; border-top-color: #7ba9d0; display: flex; flex-direction: column; }
.tabs { height: 20px; flex: none; border-bottom: 1px solid #a6a6ac; display: flex; align-items: center; padding-right: 6px; }
.active-tabs { border-right: 1px solid #7ba9d0; border-left: 1px solid #7ba9d0; margin: 0 -1px; }
.tab { height: 100%; border-right: 1px solid #a6a6ac; font: bold 11px/19px "Liberation Sans", sans-serif; letter-spacing: .15px; padding-left: 4px; white-space: nowrap; color: #222; }
.tab-pe { width: 118px; background: linear-gradient(#f5faff, #d2e7fa); display: flex; align-items: center; justify-content: space-between; padding-right: 5px; border-color: #7ba9d0; }
.tab-pi { width: 76px; padding-left: 3px; }
.tab-x { width: 51px; background: #fff; display: flex; align-items: center; justify-content: flex-end; padding-right: 5px; }
.tab.sm { width: 52.300px; letter-spacing: .3px; }
.dash { width: 10px; height: 2px; background: #444; margin-left: auto; }
.tree-wrap { height: 308px; display: flex; background: #fff; }
.tree { width: 279px; height: 311px; overflow: hidden; padding-left: 3px; margin-top: -4px; background: repeating-linear-gradient(#999 0 1px, transparent 1px 2px) 8px 0 / 1px 100% no-repeat; clip-path: inset(4px 0 0 0); }
.row { height: 18.080px; display: flex; align-items: center; white-space: nowrap; background: repeating-linear-gradient(90deg, #999 0 1px, transparent 1px 2px) 9px 9px / 9px 1px no-repeat; }
.row .bx { width: 9px; height: 9px; }
.row .ic { width: 16px; height: 15px; }
.row span { padding: 0 1px; line-height: 17px; }
.row .sel { background: #e1e1e1; }
.row .wide { letter-spacing: .12px; }
.r0 { padding-left: 1px; }
.r0 .ic { margin: 0 7px 0 7px; }
.r1 { padding-left: 20px; background: repeating-linear-gradient(#999 0 1px, transparent 1px 2px) 24px 0 / 1px 100% no-repeat, repeating-linear-gradient(90deg, #999 0 1px, transparent 1px 2px) 28px 9px / 8px 1px no-repeat; }
.r1.last { background-size: 1px 50%, 8px 1px; }
.r1 .ic { margin: 0 5px 0 8px; }
.r2 { padding-left: 55px; background: repeating-linear-gradient(#999 0 1px, transparent 1px 2px) 43px 0 / 1px 100% no-repeat, repeating-linear-gradient(90deg, #999 0 1px, transparent 1px 2px) 43px 9px / 11px 1px no-repeat; }
.r2.last { background-size: 1px 50%, 11px 1px; }
.r2 .ic { margin-right: 6.500px; }
.vscroll { width: 16px; background: #f0f0f0; display: flex; flex-direction: column; align-items: center; padding: 5px 0 4px; }
.vscroll svg, .hscroll svg { fill: none; stroke: #444; stroke-width: 1.500; }
.vscroll svg { width: 9px; height: 7px; }
.vscroll i { width: 15px; height: 232px; margin: 35px 0 17px; background: #cdcdcd; }
.hscroll { height: 16px; display: flex; align-items: center; padding-left: 4px; }
.hscroll svg { width: 7px; height: 9px; }
.hscroll i { width: 143px; height: 15px; background: #cdcdcd; margin: 0 107px 0 6px; }
.navigator { height: 363px; border: 1px solid #a6a6ac; display: flex; flex-direction: column; }
.nav-main { display: flex; padding: 3px 0 0 4px; }
.overview { width: 257px; height: 305px; border: 1px solid #aaa; border-width: 0 1px 1px 0; }
.nav-tools { margin-left: 3px; display: flex; flex-direction: column; }
.nt { width: 21px; height: 21px; margin: 2px 0 4px 2px; }
.zl { font: bold 8px "DejaVu Sans"; }
.sync { width: 27px; height: 27.500px; border: 1px solid #aaa; background: linear-gradient(#ffcb83, #ffaf58); display: flex; align-items: center; justify-content: center; }
.nav-foot { display: flex; align-items: center; padding: 3px 0 0 4px; height: 30px; }
.field { background: #fff; border: 1px solid #aaa; height: 26px; line-height: 24px; text-align: center; }
.scale { width: 70px; padding-right: 2px; }
.slider { width: 98px; height: 3px; background: #dedede; margin: 0 10px 0 7px; display: flex; align-items: center; }
.slider i { width: 6px; height: 22px; background: #0078d7; margin-left: 5px; }
.rot { width: 54px; border-right: 0; }
.spin { width: 17px; height: 26px; border: 1px solid #aaa; background: #f0f0f0; display: flex; flex-direction: column; }
.spin svg { width: 15px; height: 12px; }
.spin svg + svg { border-top: 1px solid #aaa; }
.nav-help { width: 22px; height: 22px; margin-left: 5px; }

.view { padding-top: 8px; height: 722px; display: flex; flex-direction: column; }
.view-a { width: 588px; margin-right: 4px; }
.view-b { width: 621px; }
.view-tabs { height: 20px; flex: none; display: flex; justify-content: space-between; }
.vtab { width: 152px; height: 19px; background: #fff; border: 1px solid #a6a6ac; border-bottom: 0; display: flex; align-items: center; padding: 0 3px 0 3px; }
.vtab span { margin: 0 auto 0 5px; letter-spacing: .07px; }
.view-ctl { width: 66px; height: 12px; margin: 1px 1px 0 0; }
.canvas { position: relative; flex: 1; border: 1px solid #8c8c96; background: #323232; overflow: hidden; }
.gold { box-shadow: inset 0 0 0 1px #b39a5f, inset 0 0 0 2px #c09a3a, inset 0 0 0 3px #806a31, inset 0 0 0 4px #62552f, inset 0 0 0 5px #4a4530; }
.wheel { position: absolute; left: 4px; top: 0; width: 98px; height: 122px; }
.north { position: absolute; left: 51px; top: 3px; width: 4px; height: 9px; background: #67511e; }
.scene { position: absolute; left: 2px; top: 307px; width: 145px; height: 74px; }

.side { width: 24px; padding-top: 13px; display: flex; flex-direction: column; align-items: center; }
.side-item { writing-mode: vertical-rl; display: flex; align-items: center; gap: 4px; font-size: 11px; letter-spacing: -.1px; white-space: nowrap; }
.s1 { height: 109px; border-bottom: 1px solid #aaa; }
.s2 { height: 120px; padding-top: 11px; border-bottom: 1px solid #aaa; }
.s3 { padding-top: 11px; }
.status { flex: 1; display: flex; justify-content: flex-end; align-items: center; padding: 2px 1px 0 0; }
.st { height: 20px; border-left: 1px solid #b0b0b0; line-height: 20px; display: flex; white-space: pre; }
.st-xy { width: 122px; padding-left: 27px; gap: 16.500px; }
.st-ll { width: 203px; padding-left: 52px; gap: 22.500px; }
.st-z { width: 154px; padding-left: 36px; letter-spacing: .08px; }

.dialog { position: absolute; left: 514px; top: 275px; width: 636px; height: 492px; background: #f0f0f0; box-shadow: 0 2px 14px 1px rgba(0,0,0,.6), 0 0 0 1px #555; display: flex; flex-direction: column; }
.dlg-title { height: 30px; flex: none; background: #fff; display: flex; align-items: center; padding: 0 11px 0 9px; font: 12px/16px "Open Sans", sans-serif; color: #000; }
.dlg-title span { margin: 0 auto 0 5px; letter-spacing: -.17px; }
.dlg-tabs { height: 28px; display: flex; align-items: flex-end; padding-left: 7px; }
.dt { height: 18px; line-height: 17px; border: 1px solid #ddd; border-bottom: 0; background: #f0f0f0; text-align: center; }
.dt.on { width: 104px; height: 21px; background: #fff; padding: 1px; }
.dt em { display: block; font-style: normal; height: 18px; line-height: 16px; border: 1px dotted #222; }
.dt-b { width: 87px; letter-spacing: -.25px; } .dt-w { width: 36px; }
.pane { margin: 0 8px 0 6px; height: 378px; border: 1px solid #ddd; border-top: 3px solid #fff; border-bottom: 3px double #ddd; box-shadow: 0 -1px #ddd; display: flex; padding: 3px 0 0 3px; }
.table { width: 560px; height: 368px; border: 1px solid #8c9099; }
.tr { height: 16px; display: grid; grid-template-columns: 261px 73px 89px 68px 67px; background: #fff; }
.tr span { border-right: 1px solid #888; border-bottom: 1px solid #888; padding-left: 0; height: 16px; line-height: 15px; }
.tr.th { height: 24px; }
.tr.th span { height: 24px; padding-left: 4px; line-height: 25px; border-right-color: #e3e3e3; border-bottom: 0; }
.actions { flex: 1; display: flex; flex-direction: column; align-items: center; padding-top: 7px; gap: 16.200px; }
.actions svg { width: 22px; height: 22px; }
.actions span { margin-top: -5px; white-space: nowrap; padding-left: 1px; }
.buttons { display: flex; justify-content: center; gap: 3px; padding: 11px 0 0 0; }
.btn { height: 29px; border: 1px solid #adadad; background: #e1e1e1; display: flex; align-items: center; justify-content: center; }
.b-help { width: 77px; gap: 4px; } .b-run { width: 75px; gap: 5px; }
```
